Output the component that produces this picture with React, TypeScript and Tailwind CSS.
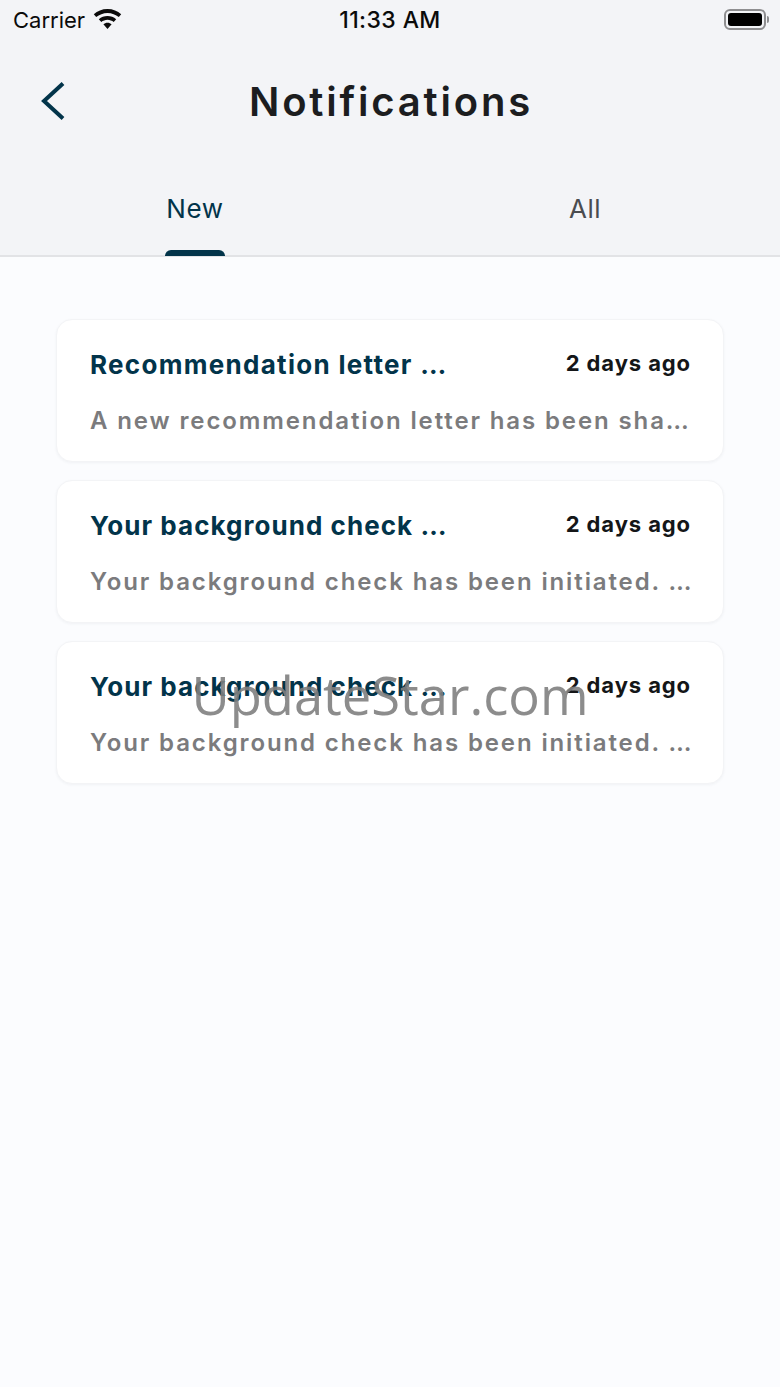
const notifications = [
  {
    title: "Recommendation letter …",
    body: "A new recommendation letter has been sha…",
    titleClass: "tracking-[1.3px]",
  },
  {
    title: "Your background check …",
    body: "Your background check has been initiated. …",
    titleClass: "tracking-[1.05px]",
  },
  {
    title: "Your background check …",
    body: "Your background check has been initiated. …",
    titleClass: "tracking-[1.05px]",
  },
];

const StatusBar = () => (
  <div className="h-10 px-[13px] flex items-center justify-between relative text-[22px] text-[#0b0b0b]">
    <div className="flex items-center gap-[8px]">
      <span>Carrier</span>
      <svg width="29" height="22" viewBox="0 0 29 22" fill="#0b0b0b" className="-mt-[3px]">
        <path d="M14.5 1C9 1 4.5 3 .8 6.200l2.400 2.900C6.300 6.500 10.200 4.900 14.500 4.900s8.200 1.600 11.300 4.200l2.400-2.900C24.500 3 20 1 14.500 1z" />
        <path d="M14.500 8c-3.300 0-6.300 1.200-8.700 3.200l2.500 2.900c1.700-1.400 3.900-2.300 6.200-2.300s4.500.9 6.200 2.300l2.500-2.900C20.800 9.200 17.800 8 14.500 8z" />
        <path d="M14.500 14.800c-1.600 0-3 .6-4.100 1.500l4.100 4.700 4.100-4.700c-1.100-.9-2.500-1.500-4.100-1.500z" />
      </svg>
    </div>
    <span className="absolute left-0 right-0 text-center text-[23px] font-medium tracking-[0.4px]">11:33 AM</span>
    <div className="flex items-center -mt-0.5 -mr-[2px]">
      <div className="w-[42px] h-[21px] rounded-[6px] border-2 border-[#8e8e90] p-[2px]">
        <div className="w-full h-full rounded-[3px] bg-black" />
      </div>
      <div className="w-[2px] h-[7px] ml-[1px] rounded-r-sm bg-[#8e8e90]" />
    </div>
  </div>
);

const NotificationCard = ({
  title,
  body,
  titleClass,
}: {
  title: string;
  body: string;
  titleClass: string;
}) => (
  <div className="h-[143px] pl-[33px] pr-[32px] pt-[29px] bg-white rounded-[16px] border border-[#f3f4f6] shadow-[0_1px_3px_rgba(30,50,80,0.05)]">
    <div className="flex justify-between items-start">
      <span className={`text-[26px] leading-[32px] font-bold text-[#02344a] ${titleClass}`}>{title}</span>
      <span className="text-[22px] leading-[28px] font-bold tracking-[0.9px] text-[#141618]">2 days ago</span>
    </div>
    <p className="mt-[24px] text-[24px] leading-[32px] font-semibold tracking-[1.88px] text-[#7b7b7d] whitespace-nowrap">{body}</p>
  </div>
);

export default function App() {
  return (
    <div className="relative min-h-[1387px] bg-[#fbfcfe] font-['Inter',sans-serif] overflow-hidden">
      <div className="h-[257px] bg-[#f3f4f7] border-b-2 border-[#e2e3e6]">
        <StatusBar />
        <div className="h-[122px] relative flex items-center justify-center pt-[2px] pl-[2px]">
          <svg width="24" height="38" viewBox="0 0 24 38" fill="none" stroke="#02344a" strokeWidth="4" className="absolute left-[41px] top-[42px]">
            <path d="M22 1.500 L3 19 L22 36.500" />
          </svg>
          <h1 className="text-[40px] leading-none font-semibold tracking-[2.8px] text-[#1c1d1f]">Notifications</h1>
        </div>
        <div className="grid grid-cols-2 h-[93px]">
          <div className="relative flex justify-center pt-[31px]">
            <span className="text-[26px] leading-[32px] tracking-[0.7px] text-[#02344a]">New</span>
            <div className="absolute left-[165px] bottom-[-1px] w-[60px] h-[6px] rounded-t-[6px] bg-[#02344a]" />
          </div>
          <div className="flex justify-center pt-[31px]">
            <span className="text-[26px] leading-[32px] tracking-[0.5px] text-[#4a4c50]">All</span>
          </div>
        </div>
      </div>
      <div className="px-[56px] pt-[62px] flex flex-col gap-[18px]">
        {notifications.map((item, i) => (
          <NotificationCard key={i} title={item.title} body={item.body} titleClass={item.titleClass} />
        ))}
      </div>
      <div className="absolute left-0 right-0 top-[664px] text-center text-[52.5px] leading-[62px] font-['Open_Sans',sans-serif] text-[#808080]/90 pointer-events-none">
        UpdateStar.com
      </div>
    </div>
  );
}
